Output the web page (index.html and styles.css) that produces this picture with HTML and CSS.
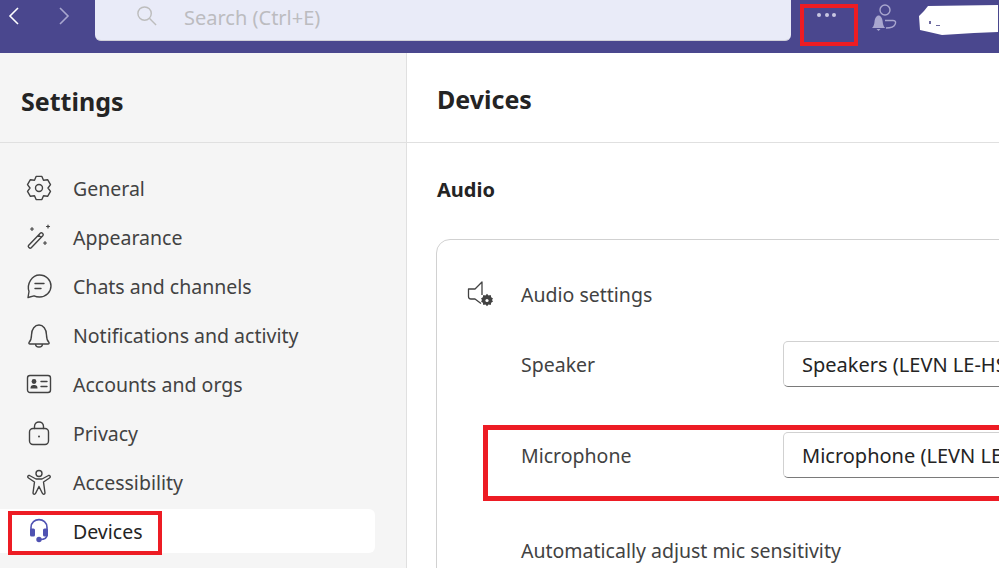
FILE: index.html
```html
<!DOCTYPE html>
<html lang="en">
<head>
<meta charset="utf-8">
<title>Settings - Devices</title>
<link rel="stylesheet" href="styles.css">
</head>
<body>
<div class="app">
  <header class="topbar">
    <div class="nav">
      <svg class="ico-nav" viewBox="0 0 14 20"><path class="chev-on" d="M11 2 3 10l8 8"/></svg>
      <svg class="ico-nav" viewBox="0 0 14 20"><path class="chev-off" d="m3 2 8 8-8 8"/></svg>
    </div>
    <div class="search">
      <svg class="ico-search" viewBox="0 0 22 22"><circle cx="9" cy="9" r="7"/><path d="m14 14 7 7"/></svg>
      <span class="search-text">Search (Ctrl+E)</span>
    </div>
    <div class="more">
      <span class="dot"></span><span class="dot"></span><span class="dot"></span>
      <span class="mark mark-more"></span>
    </div>
    <svg class="ico-presence" viewBox="0 0 26 28">
      <circle cx="14" cy="7" r="5"/>
      <path d="M14 17.500h8c3 0 3 2 2 4-1 2.500-4 3.500-9 3.500"/>
      <path class="bell" d="M1 25c1.800-1.500 2.300-4 2.600-7 .3-3 2-5.500 4-5.500s3.700 2.500 4 5.500c.3 3 .8 5.500 2.600 7zM5.500 26h4L7.500 28z"/>
    </svg>
    <svg class="scribble" viewBox="0 0 79 30"><path d="M9 1 79 0V27L55 28 23 30 10 27 1 25 0 11 5 6Z"/><path class="scribble-mark" d="M10 16h2v3h-2zM17 20h4v1h-4z"/></svg>
  </header>

  <div class="body">
    <aside class="sidebar">
      <div class="side-head"><h1 class="side-title">Settings</h1></div>
      <nav class="menu">
        <a class="item">
          <svg class="ico" viewBox="0 0 26 26"><path d="M10.100 1.400H15.900L17.500 5.200 21.600 4.700 24.500 9.700 22 13 24.500 16.300 21.600 21.300 17.500 20.800 15.900 24.600H10.100L8.500 20.800 4.400 21.300 1.500 16.300 4 13 1.500 9.700 4.400 4.700 8.500 5.200Z"/><circle cx="13" cy="13" r="3.500"/></svg>
          <span>General</span>
        </a>
        <a class="item">
          <svg class="ico" viewBox="0 0 26 26"><path d="M2.500 21.500 14.500 9c1-1 3.500 1 2.500 2.500L5 24c-1.200 1-3.500-1.200-2.500-2.500ZM12.500 11l2.500 2.500"/><path class="thin" d="M6 3.500v3M4.500 5h3M22 1v3M20.500 2.500h3M19 17.500v3M17.500 19h3"/></svg>
          <span>Appearance</span>
        </a>
        <a class="item">
          <svg class="ico" viewBox="0 0 26 26"><path d="M2 24.500 3 18.500C.5 11 6 2 13.500 2 20 2 25 7 25 13S20 24 13.500 24C11 24 9.500 23.500 8 22.800ZM9 10.500h9M9 15.500h6"/></svg>
          <span>Chats and channels</span>
        </a>
        <a class="item">
          <svg class="ico" viewBox="0 0 26 26"><path d="M3 20.500c2-2 2.500-3.500 2.500-7.500 0-6 3.500-10 7.500-10s7.500 4 7.500 10c0 4 .5 5.500 2.500 7.500.3 1 0 1.500-1 1.500H4c-1 0-1.300-.5-1-1.500ZM9.500 22c0 4 7 4 7 0"/></svg>
          <span>Notifications and activity</span>
        </a>
        <a class="item">
          <svg class="ico" viewBox="0 0 26 26"><rect x="1.500" y="4.500" width="23" height="17" rx="2.500"/><circle class="solid" cx="8" cy="10.500" r="2.400"/><path class="solid" d="M4.500 17.500c0-3 1.500-3.500 3.500-3.500s3.500.5 3.500 3.500z"/><path d="M15 10.500h6M15 15.500h6"/></svg>
          <span>Accounts and orgs</span>
        </a>
        <a class="item">
          <svg class="ico" viewBox="0 0 26 26"><rect x="3.500" y="8.500" width="19" height="16" rx="3.500"/><path d="M8.500 8.500V6.500c0-6 9-6 9 0v2"/><circle class="solid" cx="13" cy="16.500" r="1"/></svg>
          <span>Privacy</span>
        </a>
        <a class="item">
          <svg class="ico" viewBox="0 0 26 26"><circle cx="13" cy="4.500" r="3"/><path d="M3.500 6.500 10 10h6l6.500-3.500c1.500-.5 2.500 1.500 1 2.500L17.500 13l1.500 11c0 1.500-2 1.500-2.500.5L13 17.500 9.500 24.500c-.5 1-2.500 1-2.500-.5L8.500 13 2.500 9c-1.500-1-.5-3 1-2.500Z"/></svg>
          <span>Accessibility</span>
        </a>
        <a class="item item-active">
          <svg class="ico ico-active" viewBox="0 0 26 26"><path d="M5 12V9.500C5-1 21-1 21 9.500V17c0 3-3 4.500-7 4.500"/><rect class="fill-active" x="4" y="10.500" width="5" height="8" rx="1.500"/><rect class="fill-active" x="17" y="10.500" width="5" height="8" rx="1.500"/><circle class="fill-active" cx="13" cy="21.500" r="2.700"/></svg>
          <span>Devices</span>
          <span class="mark mark-devices"></span>
        </a>
      </nav>
    </aside>

    <main class="content">
      <div class="content-head"><h2 class="content-title">Devices</h2></div>
      <section class="section">
        <h3 class="section-title">Audio</h3>
        <div class="card">
          <div class="card-head">
            <svg class="ico-audio" viewBox="0 0 26 26"><path d="M15 14V1L8 8H1.500v7.500c0 1.500 1 2.500 2.500 2.500h4l6 4.500"/><path class="solid" d="M20 12.800l1.500 1.700 2.200-.4.500 2.200 1.800 1.200-1 1.500 1 1.500-1.800 1.200-.5 2.200-2.200-.4-1.500 1.700-1.500-1.700-2.200.4-.5-2.200-1.800-1.200 1-1.500-1-1.500 1.800-1.200.5-2.200 2.200.4z"/><circle class="hole" cx="20" cy="19.500" r="1.600"/></svg>
            <span>Audio settings</span>
          </div>
          <div class="field field-speaker">
            <span class="field-label">Speaker</span>
            <div class="select select-speaker">Speakers (LEVN LE-HS011 Hands-Free)</div>
          </div>
          <div class="field field-mic">
            <span class="mark mark-mic"></span>
            <span class="field-label">Microphone</span>
            <div class="select select-mic">Microphone (LEVN LE-HS011 Hands-Free)</div>
          </div>
          <div class="auto">Automatically adjust mic sensitivity</div>
        </div>
      </section>
    </main>
  </div>
</div>
</body>
</html>
```
FILE: styles.css
```css
* { box-sizing: border-box; }
html, body { margin: 0; height: 100%; overflow: hidden; }
body { font-family: "Noto Sans", "Open Sans", sans-serif; color: #424242; background: #fff; }
.app { width: 999px; height: 568px; display: flex; flex-direction: column; overflow: hidden; }

.topbar { height: 53px; flex: none; background: #4a478e; display: flex; align-items: flex-start; }
.nav { width: 95px; flex: none; display: flex; gap: 36px; padding: 6px 0 0 7px; }
.ico-nav { width: 14px; height: 20px; flex: none; fill: none; stroke-width: 1.6; }
.chev-on { stroke: #fff; }
.chev-off { stroke: #a9a7cf; }
.search { width: 696px; height: 41px; flex: none; background: #e9ebf8; border-radius: 0 0 6px 6px; border-bottom: 1px solid #cfcfd8; display: flex; align-items: center; padding: 0 0 6px 41px; }
.ico-search { width: 21px; height: 21px; fill: none; stroke: #bdbdbd; stroke-width: 1.5; margin-right: 27px; margin-top: -4px; }
.search-text { font-size: 20px; color: #bcbcc0; }
.more { position: relative; width: 58px; height: 42px; margin: 4px 0 0 9px; flex: none; display: flex; justify-content: center; gap: 3.500px; padding: 9px 5px 0 0; }
.dot { width: 4px; height: 4px; border-radius: 50%; background: #c9c7e2; }
.ico-presence { width: 26px; height: 28px; margin: 3px 0 0 13px; flex: none; fill: none; stroke: #a9a7cf; stroke-width: 1.4; }
.bell { fill: #a9a7cf; stroke: none; }
.scribble { width: 79px; height: 30px; margin: 5px 0 0 22px; flex: none; fill: #fff; }
.scribble-mark { fill: #6d6a9f; }

.mark { position: absolute; border: 4px solid #ed1c24; pointer-events: none; }
.mark-more { inset: 0; }
.mark-devices { left: 8px; top: 2px; width: 154px; height: 44px; }
.mark-mic { left: 17px; top: -7px; width: 540px; height: 76px; border-width: 5px; }

.body { flex: 1; display: flex; min-height: 0; }
.sidebar { width: 407px; flex: none; background: #f5f5f5; border-right: 1px solid #e0e0e0; }
.side-head { height: 90px; border-bottom: 1px solid #e0e0e0; padding: 31px 0 0 21px; }
.side-title { margin: 0; font-size: 25px; line-height: 34px; font-weight: 700; color: #242424; }
.menu { padding: 23px 31px 0 0; display: flex; flex-direction: column; gap: 5px; }
.item { position: relative; height: 44px; display: flex; align-items: center; gap: 21px; padding-left: 26px; font-size: 19.500px; color: #424242; border-radius: 0 6px 6px 0; }
.item-active { background: #fff; color: #242424; }
.ico { width: 26px; height: 26px; flex: none; fill: none; stroke: #424242; stroke-width: 1.4; stroke-linejoin: round; stroke-linecap: round; }
.thin { stroke-width: 1.2; }
.solid { fill: #424242; stroke: none; }
.hole { fill: #fff; stroke: none; }
.ico-active { stroke: #4f52b2; stroke-width: 1.6; }
.fill-active { fill: #4f52b2; stroke: none; }

.content { flex: 1; min-width: 0; overflow: hidden; background: #fff; }
.content-head { height: 90px; border-bottom: 1px solid #e0e0e0; padding: 29px 0 0 30px; }
.content-title { margin: 0; font-size: 25px; line-height: 34px; font-weight: 700; color: #242424; }
.section { padding: 32px 0 0 29px; }
.section-title { margin: 0 0 34px 1px; font-size: 20px; line-height: 30px; font-weight: 700; color: #242424; }
.card { width: 800px; border: 1px solid #d1d1d1; border-radius: 14px; padding: 38px 0 40px 29px; color: #242424; }
.card-head { display: flex; align-items: center; gap: 28px; height: 32px; font-size: 19.500px; color: #424242; }
.ico-audio { width: 26px; height: 26px; flex: none; fill: none; stroke: #424242; stroke-width: 1.3; stroke-linejoin: round; margin-left: 1px; }
.field { position: relative; display: flex; align-items: center; font-size: 19.500px; color: #424242; }
.field-label { width: 262px; margin-left: 55px; flex: none; }
.field-speaker { margin-top: 31px; }
.field-mic { margin-top: 45px; }
.select { width: 480px; height: 46px; background: #fff; border: 1px solid #d1d1d1; border-bottom-color: #7a7a7a; border-radius: 5px; display: flex; align-items: center; padding-left: 18px; font-size: 20px; color: #242424; white-space: nowrap; overflow: hidden; }
.auto { margin: 58px 0 0 55px; font-size: 19.500px; line-height: 30px; color: #424242; }
```
